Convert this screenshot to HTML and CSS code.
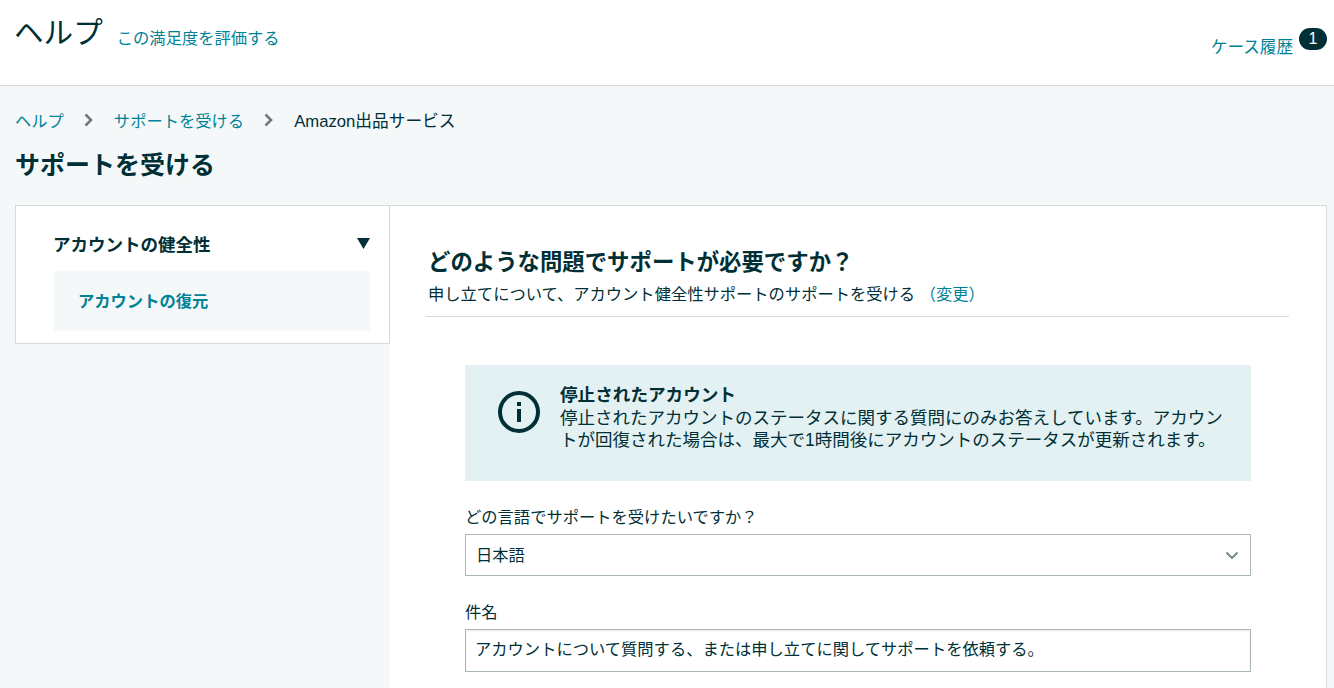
FILE: index.html
```html
<!DOCTYPE html>
<html lang="ja">
<head>
	<meta charset="utf-8">
	<title>サポートを受ける</title>
	<link rel="stylesheet" href="styles.css">
</head>
<body>
	<header class="top">
		<div class="top-left">
			<span class="top-title">ヘルプ</span>
			<a class="link top-rate">この満足度を評価する</a>
		</div>
		<div class="top-right">
			<a class="link top-cases">ケース履歴</a>
			<span class="badge">1</span>
		</div>
	</header>

	<nav class="crumbs">
		<a class="link">ヘルプ</a>
		<svg class="crumb-arrow" viewBox="0 0 10 14"><path d="M1.500 1.500L7 7l-5.500 5.500" fill="none" stroke="#6f7b80" stroke-width="2.600"/></svg>
		<a class="link">サポートを受ける</a>
		<svg class="crumb-arrow" viewBox="0 0 10 14"><path d="M1.500 1.500L7 7l-5.500 5.500" fill="none" stroke="#6f7b80" stroke-width="2.600"/></svg>
		<span class="crumb-last">Amazon出品サービス</span>
	</nav>

	<h1 class="page-title">サポートを受ける</h1>

	<div class="layout">
		<aside class="side">
			<div class="side-head">
				<span>アカウントの健全性</span>
				<svg class="side-arrow" viewBox="0 0 13 11"><path d="M0 0h13L6.500 11z" fill="#002f36"/></svg>
			</div>
			<div class="side-item">アカウントの復元</div>
		</aside>

		<main class="main">
			<div class="main-head">
				<h2>どのような問題でサポートが必要ですか？</h2>
				<p>申し立てについて、アカウント健全性サポートのサポートを受ける <a class="link">（変更）</a></p>
			</div>

			<div class="form">
				<div class="notice">
					<svg class="notice-icon" viewBox="0 0 42 42">
						<circle cx="21" cy="21" r="19" fill="none" stroke="#002f36" stroke-width="4"/>
						<rect x="19" y="18" width="4" height="13" fill="#002f36"/>
						<rect x="19" y="11" width="4" height="4" fill="#002f36"/>
					</svg>
					<div class="notice-text">
						<strong>停止されたアカウント</strong>
						<p>停止されたアカウントのステータスに関する質問にのみお答えしています。アカウントが回復された場合は、最大で1時間後にアカウントのステータスが更新されます。</p>
					</div>
				</div>

				<label class="field-label">どの言語でサポートを受けたいですか？</label>
				<div class="select">
					<span>日本語</span>
					<svg class="select-arrow" viewBox="0 0 14 9"><path d="M1.500 1.500L7 7l5.500-5.500" fill="none" stroke="#7d8c92" stroke-width="2.200"/></svg>
				</div>

				<label class="field-label subject-label">件名</label>
				<div class="input"><span>アカウントについて質問する、または申し立てに関してサポートを依頼する。</span></div>
			</div>
		</main>
	</div>
</body>
</html>
```

FILE: styles.css
```css
html, body {
	height: 100%;
}

body {
	margin: 0;
	overflow: hidden;
	background-color: #f5f8f9;
	color: #002f36;
	font-family: "Liberation Sans", "Noto Sans CJK JP", sans-serif;
	font-size: 16.3px;
}

.link {
	color: #008296;
}

.top {
	display: flex;
	justify-content: space-between;
	height: 85px;
	padding: 0 7px 0 15px;
	background-color: white;
	border-bottom: 1px solid #d5dbdb;
}

.top-left {
	display: flex;
	align-items: baseline;
	gap: 14px;
	padding-top: 9px;
}

.top-title {
	font-size: 29.600px;
	margin-left: -1px;
}

.top-rate {
	position: relative;
	top: 1px;
}

.top-right {
	display: flex;
	align-items: flex-start;
	gap: 6px;
	padding-top: 28px;
}

.top-cases {
	margin-top: 6px;
	font-size: 16.600px;
}

.badge {
	width: 28px;
	height: 22px;
	border-radius: 11px;
	background-color: #002f36;
	color: white;
	font-size: 16px;
	line-height: 22px;
	text-align: center;
}

.crumbs {
	display: flex;
	align-items: center;
	gap: 20px;
	padding: 21px 15px 0;
	height: 26px;
}

.crumb-arrow {
	width: 10px;
	height: 14px;
}

.crumb-last {
	font-size: 16.700px;
}

.page-title {
	margin: 0;
	padding: 14px 15px 0;
	font-size: 25px;
	line-height: 36px;
}

.layout {
	display: flex;
	margin: 22px 7px 0 15px;
	height: 600px;
}

.side {
	box-sizing: border-box;
	width: 375px;
	height: 139px;
	padding: 21px 19px 12px 38px;
	background-color: white;
	border: 1px solid #d5dbdb;
}

.side-head {
	display: flex;
	justify-content: space-between;
	align-items: center;
	height: 33px;
	margin-bottom: 11px;
	font-size: 17.500px;
	font-weight: bold;
	text-indent: -1px;
}

.side-arrow {
	width: 13px;
	height: 11px;
}

.side-item {
	height: 60px;
	padding-left: 24px;
	background-color: #f5f8f9;
	color: #008296;
	font-weight: bold;
	line-height: 60px;
}

.main {
	flex: 1;
	padding: 37px 37px 0 36px;
	background-color: white;
	border: 1px solid #d5dbdb;
	border-left: 0;
}

.main-head {
	padding: 0 2px 10px;
	border-bottom: 1px solid #d5dbdb;
}

.main-head h2 {
	margin: 0;
	font-size: 22.400px;
	line-height: 39px;
}

.main-head p {
	margin: 0;
	line-height: 24px;
}

.form {
	padding: 48px 38px 0 39px;
}

.notice {
	display: flex;
	gap: 20px;
	height: 116px;
	box-sizing: border-box;
	padding: 18px 20px 0 33px;
	background-color: #e3f1f3;
}

.notice-icon {
	flex: none;
	width: 42px;
	height: 42px;
	margin-top: 8px;
}

.notice-text strong {
	display: block;
	font-size: 17.600px;
	line-height: 24px;
}

.notice-text p {
	margin: 0;
	font-size: 17.500px;
	line-height: 22px;
}

.field-label {
	display: block;
	margin-top: 24px;
	line-height: 24px;
}

.subject-label {
	margin-top: 24px;
}

.select, .input {
	display: flex;
	align-items: center;
	box-sizing: border-box;
	margin-top: 5px;
	padding: 0 10px;
	background-color: white;
	border: 1px solid #a9b7b8;
}

.select {
	justify-content: space-between;
	height: 42px;
	line-height: 38px;
}

.input {
	height: 43px;
	padding: 0 9px 4px;
	line-height: 36px;
	box-shadow: inset 0 1px 2px rgba(0, 0, 0, 0.08);
}

.select-arrow {
	width: 14px;
	height: 9px;
	margin-right: 1px;
}
```
